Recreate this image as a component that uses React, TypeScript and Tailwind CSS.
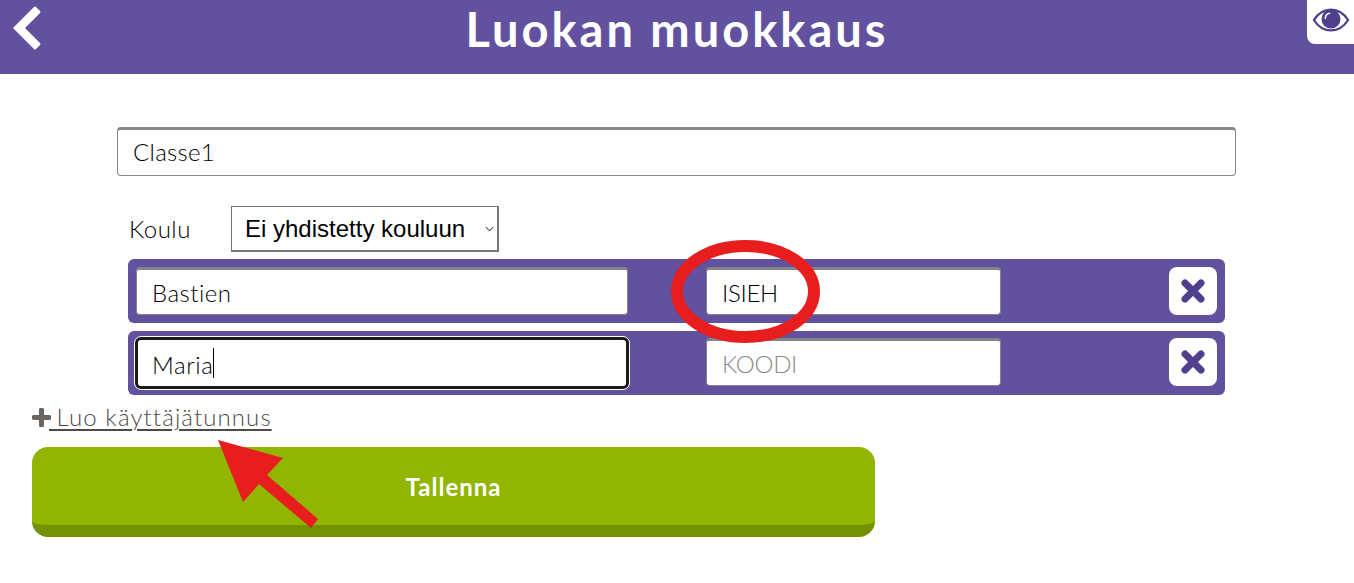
import React from "react";

const font = "font-['Lato','Noto_Sans',sans-serif]";

const inputClass =
  "h-[48px] rounded-[4px] border-t-[3px] border-x border-b border-[#858585] bg-white pl-[15px] text-[24px] font-light text-black outline-none placeholder:text-[#8a8a8a]";

const RemoveButton = () => (
  <button className="flex h-[48px] w-[48px] items-center justify-center rounded-[8px] bg-white">
    <svg viewBox="0 0 24 24" className="h-[24px] w-[24px]">
      <path d="M4 4L20 20M20 4L4 20" fill="none" stroke="#4f3f8c" strokeWidth="7" strokeLinecap="round" />
    </svg>
  </button>
);

const App: React.FC = () => {
  return (
    <div className={`relative h-[583px] w-[1354px] overflow-hidden bg-white ${font}`}>
      <header className="relative flex h-[74px] items-center justify-center bg-[#62519f]">
        <svg viewBox="0 0 28 44" className="absolute left-[13px] top-[6px] h-[44px] w-[28px]">
          <path d="M0 22L21 1Q22 0 23 1L27 5Q28 6 27 7L12 22L27 37Q28 38 27 39L23 43Q22 44 21 43Z" fill="white" />
        </svg>
        <h1 className="mb-[16px] text-[47px] font-bold tracking-[3px] text-white">Luokan muokkaus</h1>
        <button className="absolute right-0 top-0 flex h-[44px] w-[47px] items-center justify-center rounded-bl-[8px] bg-white">
          <svg viewBox="0 0 40 26" className="mb-[4px] h-[26px] w-[38px]">
            <path
              d="M2 13C7 5 13 2 20 2s13 3 18 11c-5 8-11 11-18 11S7 21 2 13Z"
              fill="white"
              stroke="#4f3f8c"
              strokeWidth="2.4"
            />
            <circle cx="20" cy="12" r="10" fill="#4f3f8c" />
            <path d="M14 11.5c0-3 2-5 4.5-5.5" fill="none" stroke="white" strokeWidth="1.6" strokeLinecap="round" />
          </svg>
        </button>
      </header>

      <div className="pl-[117px] pt-[53px]">
        <input
          readOnly
          value="Classe1"
          className="block h-[49px] w-[1119px] rounded-[4px] border-t-[3px] border-x border-b border-[#858585] bg-white pb-[2px] pl-[15px] text-[24px] font-light tracking-[0.3px] text-black outline-none"
        />

        <div className="mt-[30px] flex items-center pl-[12px]">
          <span className="w-[102px] text-[24px] font-light tracking-[0.5px] text-black">Koulu</span>
          <div className="flex h-[46px] w-[268px] items-center justify-between border border-b-2 border-r-2 border-[#767676] pl-[13px] pr-[3px] font-['Liberation_Sans',sans-serif] text-[24px] text-black">
            <span>Ei yhdistetty kouluun</span>
            <svg viewBox="0 0 10 6" className="h-[6px] w-[9px]">
              <path d="M1 1l4 4 4-4" fill="none" stroke="#555" strokeWidth="1.2" />
            </svg>
          </div>
        </div>

        <div className="ml-[11px] mt-[7px] flex w-[1097px] flex-col gap-[8px]">
          <div className="flex h-[64px] items-center rounded-[6px] bg-[#62519f] px-[8px]">
            <input readOnly value="Bastien" className={`${inputClass} w-[492px] tracking-[0.5px]`} />
            <input readOnly value="ISIEH" className={`${inputClass} ml-[78px] w-[295px] tracking-[-0.3px]`} />
            <div className="ml-auto">
              <RemoveButton />
            </div>
          </div>
          <div className="flex h-[64px] items-center rounded-[6px] bg-[#62519f] px-[8px]">
            <div className="-mx-[1px] flex h-[52px] w-[494px] items-center rounded-[6px] border-[3px] border-[#1a1a1a] bg-white pl-[14px] pt-[3px] text-[24px] font-light tracking-[0.6px] text-black outline outline-1 outline-white">
              Maria
              <span className="mb-[3px] h-[30px] w-px bg-black" />
            </div>
            <input placeholder="KOODI" className={`${inputClass} mb-[2px] ml-[78px] w-[295px] tracking-[-0.3px]`} />
            <div className="mb-[2px] ml-auto">
              <RemoveButton />
            </div>
          </div>
        </div>
      </div>

      <a className="ml-[32px] mt-[4px] flex items-center text-[24px] font-light tracking-[1.1px] text-[#4f4a46] underline decoration-[2px] underline-offset-[3px]">
        <svg viewBox="0 0 19 19" className="mr-[-2px] h-[19px] w-[19px]">
          <path d="M2 9.5H17M9.5 2V17" fill="none" stroke="#6b6560" strokeWidth="5" strokeLinecap="round" />
        </svg>
        <span>&nbsp;Luo käyttäjätunnus</span>
      </a>

      <button className="ml-[32px] mt-[12px] block h-[90px] w-[843px] rounded-[16px] border-b-[12px] border-[#739100] bg-[#91b500] pt-[1px] text-[24px] font-bold tracking-[1px] text-white">
        Tallenna
      </button>

      <svg className="pointer-events-none absolute left-0 top-0" width="1354" height="583" viewBox="0 0 1354 583">
        <ellipse cx="745.5" cy="291.5" rx="68.5" ry="45.5" fill="none" stroke="#e81e1e" strokeWidth="12" />
        <path d="M218 440L283 458L267 475L318 519L311 528L259 484L243 502Z" fill="#e81e1e" />
      </svg>
    </div>
  );
};

export default App;
